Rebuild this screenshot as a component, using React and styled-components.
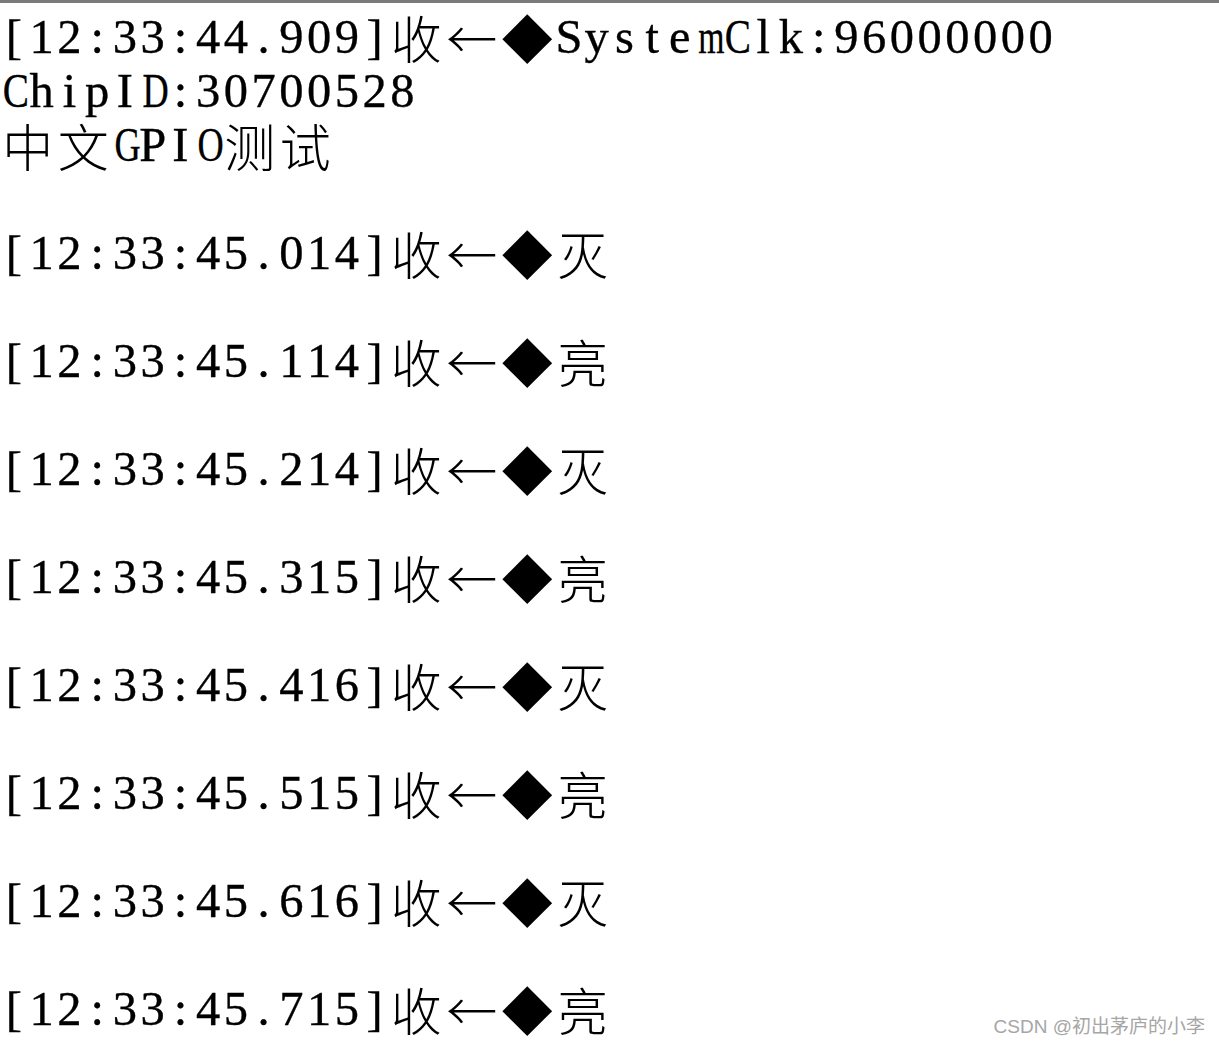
import styled, { createGlobalStyle } from 'styled-components'

const HALF = 27.75;
const FULL = HALF * 2;
const FONT = 48.5;

// advance widths of Liberation Serif (per em) for the wide letters,
// used to squeeze them into a terminal cell
const GLYPH_W = {
  A: 0.722, B: 0.667, C: 0.667, D: 0.722, E: 0.611, G: 0.722, H: 0.722,
  K: 0.722, M: 0.889, N: 0.722, O: 0.722, Q: 0.722, R: 0.667, U: 0.722,
  V: 0.722, W: 0.944, X: 0.722, Y: 0.722, m: 0.778, w: 0.722,
};

const GlobalStyle = createGlobalStyle`
  html, body {
    margin: 0;
    padding: 0;
    background: #fff;
  }
  body {
    width: 1219px;
    height: 1046px;
    overflow: hidden;
  }
`;

const Screen = styled.div`
  position: relative;
  width: 1219px;
  height: 1046px;
  border-top: 3px solid #7a7a7a;
  box-sizing: border-box;
  background: #fff;
  overflow: hidden;
`;

const Terminal = styled.div`
  display: flex;
  flex-direction: column;
  padding: 7px 0 0 0;
  font-family: "Liberation Serif", "Noto Sans CJK SC", serif;
  font-size: ${FONT}px;
  color: #000;
`;

const Line = styled.div`
  display: flex;
  height: 54px;
  line-height: 54px;
  white-space: pre;
`;

const Cell = styled.span`
  display: inline-block;
  width: ${p => (p.$wide ? FULL : HALF)}px;
  text-align: center;
  font-family: ${p => (p.$wide ? '"Noto Sans CJK SC", sans-serif' : '"Liberation Serif", serif')};
  font-size: ${p => (p.$wide ? 51 : FONT)}px;
  font-weight: ${p => (p.$wide ? 300 : 400)};
  -webkit-text-stroke: ${p => (p.$wide ? 0 : 0.35)}px #000;
  transform: scaleX(${p => p.$scale});
`;

const Watermark = styled.div`
  position: absolute;
  right: 14px;
  bottom: 8px;
  font-family: "Liberation Sans", "Noto Sans CJK SC", sans-serif;
  font-size: 19px;
  color: #a6a6a6;
`;

const isWide = ch => ch.charCodeAt(0) > 0x2000;
const scaleOf = ch => {
  const w = GLYPH_W[ch];
  return w ? Math.min(1, 0.54 / w).toFixed(3) : 1;
};

function TermLine({ text }) {
  return (
    <Line>
      {[...text].map((ch, i) => (
        <Cell key={i} $wide={isWide(ch)} $scale={scaleOf(ch)}>{ch}</Cell>
      ))}
    </Line>
  );
}

const lines = [
  '[12:33:44.909]收←◆SystemClk:96000000',
  'ChipID:30700528',
  '中文GPIO测试',
  '',
  '[12:33:45.014]收←◆灭',
  '',
  '[12:33:45.114]收←◆亮',
  '',
  '[12:33:45.214]收←◆灭',
  '',
  '[12:33:45.315]收←◆亮',
  '',
  '[12:33:45.416]收←◆灭',
  '',
  '[12:33:45.515]收←◆亮',
  '',
  '[12:33:45.616]收←◆灭',
  '',
  '[12:33:45.715]收←◆亮',
];

export default function App() {
  return (
    <Screen>
      <GlobalStyle />
      <Terminal>
        {lines.map((t, i) => <TermLine key={i} text={t} />)}
      </Terminal>
      <Watermark>CSDN @初出茅庐的小李</Watermark>
    </Screen>
  );
}
